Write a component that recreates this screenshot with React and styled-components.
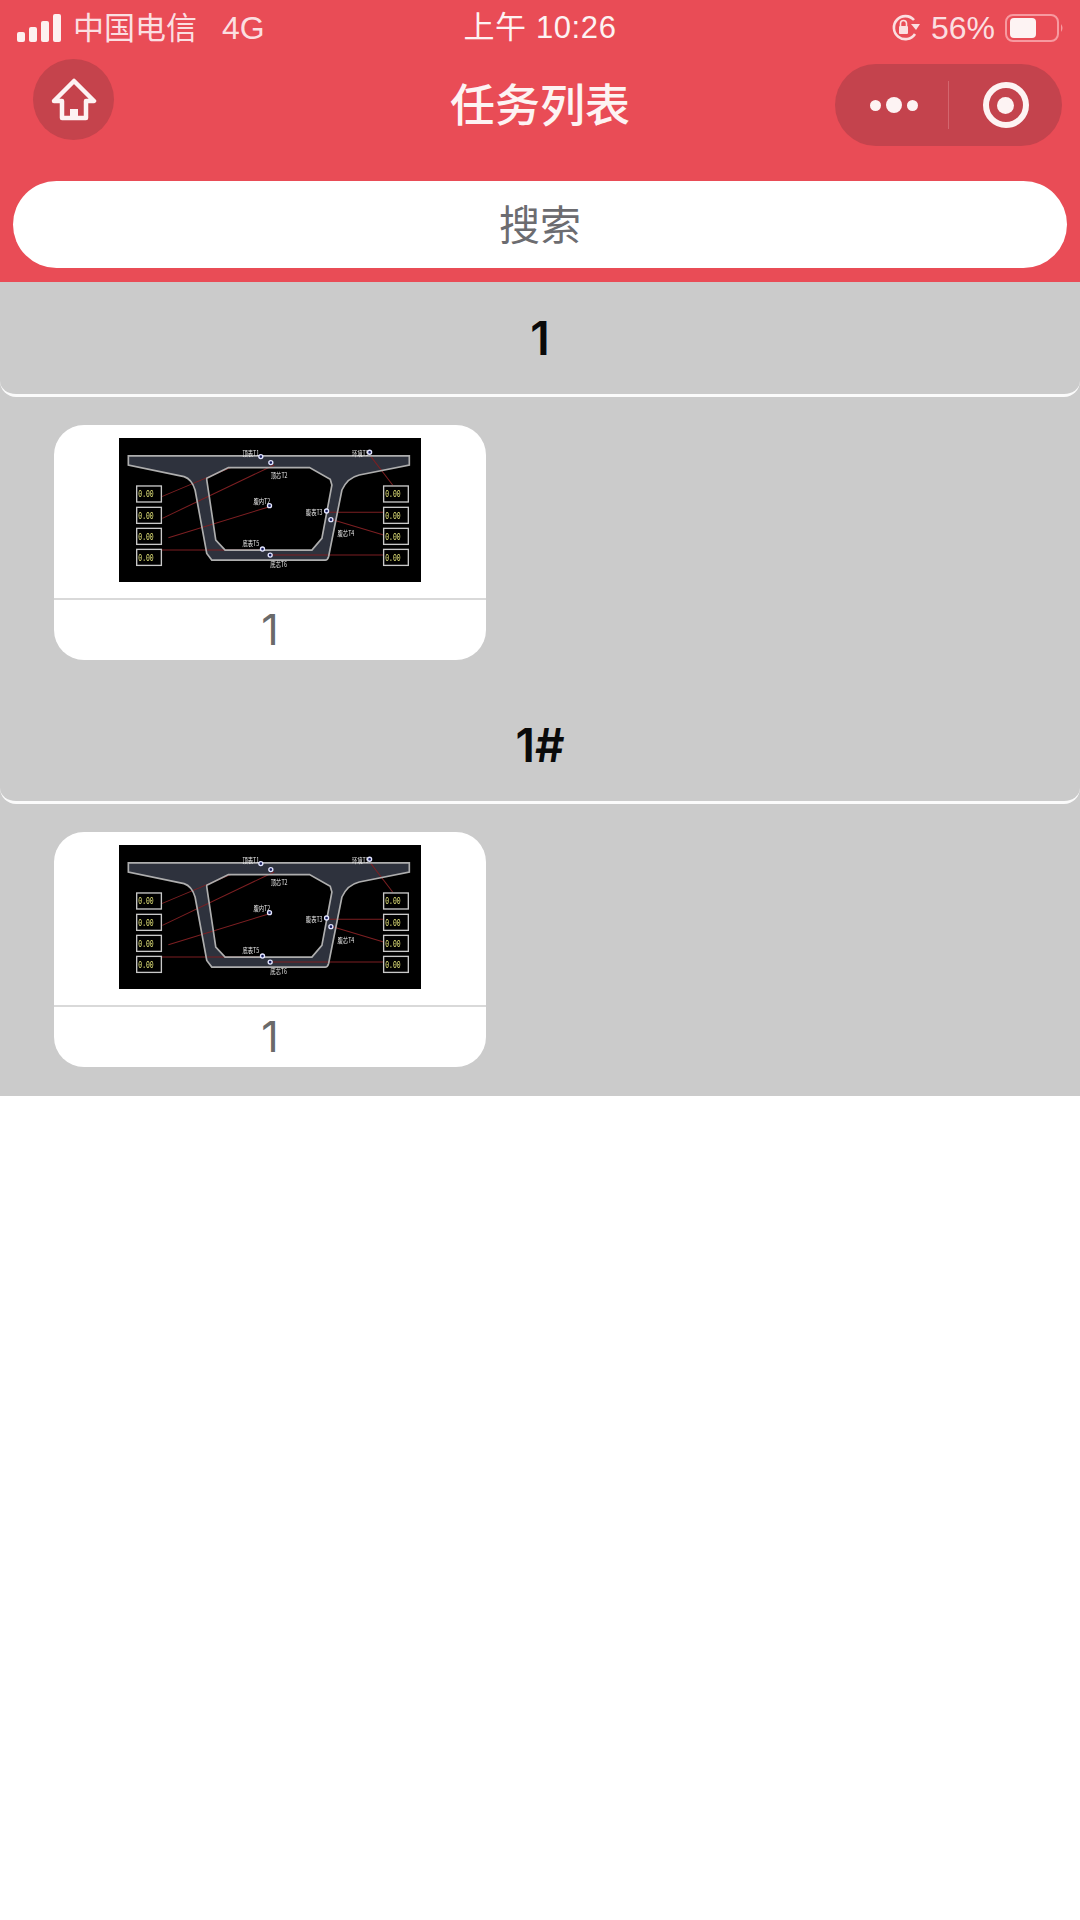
import React from "react";
import styled, { createGlobalStyle } from "styled-components";

const Global = createGlobalStyle`
  html, body { margin: 0; padding: 0; background: #fff; }
  body { font-family: "Liberation Sans", "Noto Sans CJK SC", sans-serif; }
`;
const Page = styled.div`width: 1080px; min-height: 1920px; background: #fff;`;
const Header = styled.header`background: #e94c56; color: #fff;`;
const StatusBar = styled.div`
  height: 50px; display: grid; grid-template-columns: minmax(0, 1fr) auto minmax(0, 1fr); align-items: center;
  padding: 4px 14px 0 17px; box-sizing: border-box;
`;
const StatusGroup = styled.div`
  display: flex; align-items: center; gap: ${p => p.$gap || 0}px;
  justify-content: ${p => (p.$end ? "flex-end" : "flex-start")};
`;
const Carrier = styled.span`
  font-size: 31px; line-height: 46px; color: #fbdfe1; margin: -4px 0 0 ${p => p.$ml || 0}px;
  font-family: "Noto Sans CJK SC", sans-serif; font-weight: 400; white-space: nowrap;
`;
const Network = styled.span`font-size: 32px; line-height: 46px; color: #fbdfe1; margin-left: ${p => p.$ml || 0}px; white-space: nowrap;`;
const Clock = styled.span`
  font-size: 31px; line-height: 46px; color: #fdf3f3; letter-spacing: 0.6px; white-space: nowrap; margin: 1px 0 0 -3px;
  font-family: "Liberation Sans", "Noto Sans CJK SC", sans-serif;
`;
const Nav = styled.div`
  height: 110px; display: grid; grid-template-columns: minmax(0, 1fr) auto minmax(0, 1fr); align-items: center;
  padding: 0 18px 0 33px; box-sizing: border-box;
`;
const HomeButton = styled.div`
  width: 81px; height: 81px; border-radius: 50%; background: #c5434c;
  display: flex; align-items: center; justify-content: center; margin-top: -11px;
`;
const Title = styled.h1`
  margin: -5px 15px 0 0; font-size: 45px; line-height: 60px; font-weight: 500;
  font-family: "Noto Sans CJK SC", sans-serif; color: #fdf3f3;
`;
const Capsule = styled.div`
  justify-self: end; width: 227px; height: 82px; border-radius: 41px; background: #c4434d;
  display: grid; grid-template-columns: 1fr 1px 1fr; align-items: center; justify-items: center;
`;
const CapsuleDivider = styled.div`width: 1px; height: 48px; background: #d4666e;`;
const Dots = styled.div`display: flex; align-items: center; gap: 5px; margin-left: 5px;`;
const Dot = styled.span`
  width: ${p => p.$size}px; height: ${p => p.$size}px; border-radius: 50%; background: #fdf3f3;
`;
const Target = styled.div`
  width: 46px; height: 46px; border: 6px solid #fdf3f3; border-radius: 50%; box-sizing: border-box;
  display: flex; align-items: center; justify-content: center;
  &::after { content: ""; width: 17px; height: 17px; border-radius: 50%; background: #fdf3f3; }
`;
const SearchWrap = styled.div`padding: 21px 13px 14px;`;
const SearchBox = styled.div`
  height: 87px; border-radius: 44px; background: #fff; color: #6c6c70; padding-bottom: 5px; box-sizing: border-box;
  display: flex; align-items: center; justify-content: center;
  font-size: 41px; font-family: "Noto Sans CJK SC", sans-serif; font-weight: 400;
`;
const List = styled.main`background: #cbcbcb;`;
const SectionHead = styled.div`
  height: 115px; box-sizing: border-box; border-bottom: 3px solid #fbfbfb; border-radius: 0 0 16px 16px;
  display: flex; align-items: center; justify-content: center;
  font-family: Inter, sans-serif; font-size: 46px; font-weight: 600; color: #0a0a0a;
`;
const SectionBody = styled.div`padding: 28px 54px 29px; display: flex;`;
const Card = styled.article`
  width: 432px; height: 235px; box-sizing: border-box; padding-top: 13px;
  border-radius: 30px; background: #fff; display: flex; flex-direction: column; align-items: center;
`;
const Thumb = styled.svg`display: block; width: 302px; height: 144px; flex: none; background: #000; filter: blur(0.35px);`;
const CardLabel = styled.div`
  align-self: stretch; margin-top: 16px; border-top: 2px solid #d9d9d9; flex: 1; padding-bottom: 2px;
  display: flex; align-items: center; justify-content: center;
  font-family: Inter, sans-serif; font-size: 43px; font-weight: 400; color: #6a6a6a;
`;

const outer = "M28 53 L870 53 L870 80 L720 110 Q685 118 668 155 L628 355 Q625 365 618 365 L278 365 L263 345 L228 155 Q218 122 195 115 L28 80 Z";
const inner = "M263 120 L328 88 L571 88 L633 123 L638 140 L608 300 L578 335 L318 335 L290 305 L263 125 Z";
const boxes = [143, 207, 270, 333];
const reds = [
  [128, 175, 335, 88], [130, 240, 465, 80], [148, 298, 451, 205], [128, 335, 430, 335],
  [630, 222, 793, 222], [640, 244, 793, 290], [630, 350, 793, 350], [453, 350, 630, 350], [755, 55, 820, 140],
];
const nodes = [[425, 55], [455, 73], [451, 202], [622, 218], [635, 244], [430, 332], [453, 350], [751, 42]];
const labels = [
  [370, 54, "顶表T1"], [455, 118, "顶芯T2"], [403, 198, "腹内T2"], [560, 230, "腹表T3"],
  [655, 292, "腹芯T4"], [370, 324, "底表T5"], [453, 387, "底芯T6"], [698, 54, "环境T9"],
];

const BridgeThumb = () => (
  <Thumb viewBox="0 0 905 430" aria-hidden="true">
    <path d={outer + " " + inner} fill="#2e323d" fillRule="evenodd" />
    {reds.map(([a, b, c, d], i) => (
      <line key={i} x1={a} y1={b} x2={c} y2={d} stroke="#7d1f22" strokeWidth="3" />
    ))}
    <path d={outer} fill="none" stroke="#aeaeae" strokeWidth="5" />
    <path d={inner} fill="none" stroke="#aeaeae" strokeWidth="5" />
    {[53, 793].map(x =>
      boxes.map(y => (
        <g key={x + "-" + y}>
          <rect x={x} y={y} width="74" height="48" fill="#000" stroke="#c9c9c9" strokeWidth="4" />
          <text x={x + 5} y={y + 34} fill="#e6e67a" fontSize="32" textLength="46" lengthAdjust="spacingAndGlyphs" fontFamily="Liberation Mono, monospace">0.00</text>
        </g>
      ))
    )}
    {labels.map(([x, y, t]) => (
      <text key={t} x={x} y={y} fill="#e8e8e8" fontSize="22" textLength="50" lengthAdjust="spacingAndGlyphs" fontFamily="Noto Sans CJK SC, sans-serif">{t}</text>
    ))}
    {nodes.map(([x, y]) => (
      <circle key={x + "" + y} cx={x} cy={y} r="6" fill="#1a2060" stroke="#e3e6ff" strokeWidth="4" />
    ))}
  </Thumb>
);

const SignalIcon = () => (
  <svg width="44" height="28" viewBox="0 0 44 28" fill="#fdf0f0" aria-hidden="true">
    <rect x="0" y="18" width="8" height="10" rx="2" />
    <rect x="12" y="13" width="8" height="15" rx="2" />
    <rect x="24" y="7" width="8" height="21" rx="2" />
    <rect x="36" y="0" width="8" height="28" rx="2" />
  </svg>
);
const RotationIcon = () => (
  <svg width="30" height="28" viewBox="0 0 30 28" fill="none" aria-hidden="true">
    <path d="M24 20 A11.5 11.5 0 1 1 23 6" stroke="#fbdfe1" strokeWidth="2.6" />
    <path d="M20 10 L29 10 L25 16 Z" fill="#fbdfe1" />
    <rect x="8" y="12" width="9" height="8" rx="1" fill="#fbdfe1" />
    <path d="M9.5 12 V9.5 a3 3 0 0 1 6 0 V12" stroke="#fbdfe1" strokeWidth="1.6" />
  </svg>
);
const BatteryIcon = () => (
  <svg width="62" height="30" viewBox="0 0 60 30" fill="none" aria-hidden="true">
    <rect x="1" y="2" width="52" height="26" rx="7" stroke="#f79aa0" strokeWidth="2" />
    <rect x="5" y="5" width="26" height="20" rx="4" fill="#fdf3f3" />
    <path d="M56 11 Q59 15 56 19 Z" fill="#f79aa0" />
  </svg>
);
const HomeIcon = () => (
  <svg width="46" height="44" viewBox="0 0 46 44" fill="none" aria-hidden="true">
    <path d="M3 23 L23 3 L43 23 H35 V40 H11 V23 Z" stroke="#fdf3f3" strokeWidth="4.5" strokeLinejoin="round" />
    <rect x="19" y="31" width="8" height="9" fill="#fdf3f3" />
  </svg>
);

const sections = [{ title: "1", card: "1" }, { title: "1#", card: "1" }];

export default function App() {
  return (
    <Page>
      <Global />
      <Header>
        <StatusBar>
          <StatusGroup>
            <SignalIcon />
            <Carrier $ml={12}>中国电信</Carrier>
            <Network $ml={25}>4G</Network>
          </StatusGroup>
          <Clock>上午 10:26</Clock>
          <StatusGroup $end $gap={9}>
            <RotationIcon />
            <Network $ml={1}>56%</Network>
            <BatteryIcon />
          </StatusGroup>
        </StatusBar>
        <Nav>
          <HomeButton><HomeIcon /></HomeButton>
          <Title>任务列表</Title>
          <Capsule>
            <Dots>
              <Dot $size={11} /><Dot $size={16} /><Dot $size={11} />
            </Dots>
            <CapsuleDivider />
            <Target />
          </Capsule>
        </Nav>
        <SearchWrap>
          <SearchBox>搜索</SearchBox>
        </SearchWrap>
      </Header>
      <List>
        {sections.map((s, i) => (
          <section key={i}>
            <SectionHead>{s.title}</SectionHead>
            <SectionBody>
              <Card>
                <BridgeThumb />
                <CardLabel>{s.card}</CardLabel>
              </Card>
            </SectionBody>
          </section>
        ))}
      </List>
    </Page>
  );
}
